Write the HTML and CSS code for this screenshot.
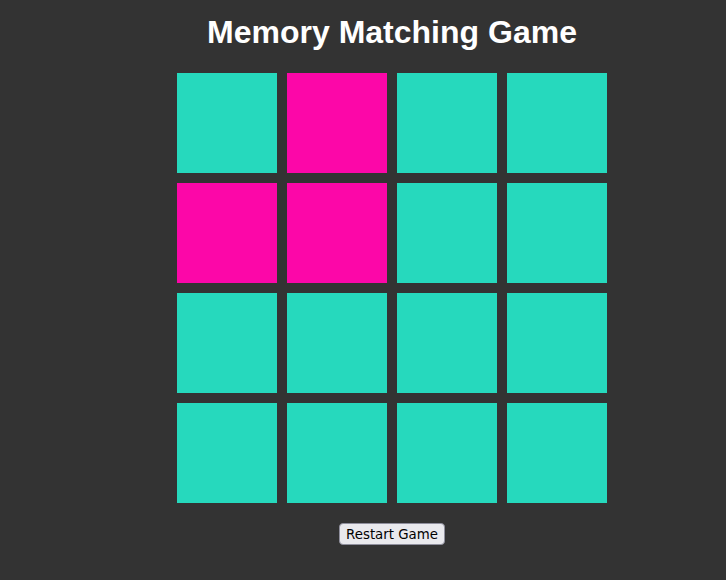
FILE: index.html
```
<!DOCTYPE html>
<html>
<head>
<meta charset="utf-8">
<title>Memory Matching Game</title>
<link rel="stylesheet" href="styles.css">
</head>
<body>
<div class="app">
  <h1 class="title">Memory Matching Game</h1>
  <div class="board">
    <div class="card"></div>
    <div class="card flipped"></div>
    <div class="card"></div>
    <div class="card"></div>
    <div class="card flipped"></div>
    <div class="card flipped"></div>
    <div class="card"></div>
    <div class="card"></div>
    <div class="card"></div>
    <div class="card"></div>
    <div class="card"></div>
    <div class="card"></div>
    <div class="card"></div>
    <div class="card"></div>
    <div class="card"></div>
    <div class="card"></div>
  </div>
  <button class="restart">Restart Game</button>
</div>
</body>
</html>
```
FILE: styles.css
```
html, body {
  margin: 0;
  padding: 0;
  background: #333333;
}
.app {
  box-sizing: border-box;
  width: 726px;
  padding-left: 58px;
  display: flex;
  flex-direction: column;
  align-items: center;
  font-family: "Liberation Sans", Arial, sans-serif;
}
.title {
  margin: 14px 0 22px;
  font-size: 32px;
  font-weight: bold;
  color: #ffffff;
}
.board {
  display: grid;
  grid-template-columns: repeat(4, 100px);
  grid-auto-rows: 100px;
  gap: 10px;
}
.card {
  background: #26d9bd;
}
.card.flipped {
  background: #fc07a8;
}
.restart {
  margin-top: 20px;
  height: 22px;
  padding: 1px 6px;
  border: 1px solid #8f8f9d;
  border-radius: 4px;
  background: #e9e9ed;
  color: #000000;
  font-family: "DejaVu Sans", sans-serif;
  font-size: 13.333px;
}
```
